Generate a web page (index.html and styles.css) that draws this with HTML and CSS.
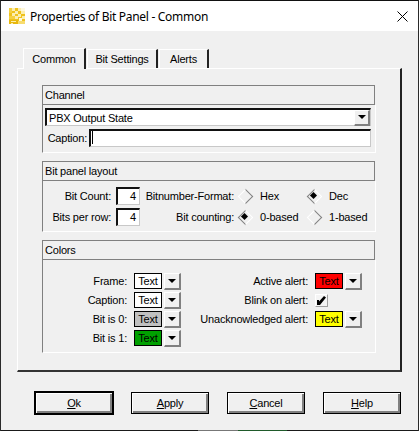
FILE: index.html
```html
<!DOCTYPE html>
<html lang="en">
<head>
    <meta charset="UTF-8">
    <title>Properties of Bit Panel - Common</title>
    <link rel="stylesheet" href="styles.css">
</head>
<body>
<div class="window">
    <div class="titlebar">
        <svg class="app-icon" width="16" height="16" viewBox="0 0 16 16">
            <rect width="16" height="16" fill="#efc21c"/>
            <path d="M3 0h3v3H3zM9 0h3v3H9zM6 3h3v3H6zM12 3h4v3h-4zM3 5h3v3H3zM9 6h3v3H9zM13 8h3v3h-3zM6 8h3v3H6z" fill="#fbeeb0"/>
            <path d="M12 0h4v3h-4zM10 10h3v3h-3z" fill="#fff8dc"/>
            <path d="M0 0h3v5H0zM0 8h6v3H0z" fill="#f5d040"/>
            <path d="M0 12h9v4H0z" fill="#e8b80e"/>
            <path d="M2 13h5v1H2zM2 15h2v1H2z" fill="#fbeeb0"/>
            <path d="M9 13h7v3H9z" fill="#f7dc70"/>
        </svg>
        <span class="title">Properties of Bit Panel - Common</span>
        <svg class="close" width="11" height="11" viewBox="0 0 11 11">
            <path d="M0.5 0.5l10 10M10.5 0.5l-10 10" stroke="#000" fill="none"/>
        </svg>
    </div>

    <div class="dialog">
        <div class="tabs">
            <div class="tab tab-active">Common</div>
            <div class="tab tab-settings">Bit Settings</div>
            <div class="tab tab-alerts">Alerts</div>
        </div>

        <div class="page">
            <!-- Channel -->
            <section class="group group-channel">
                <div class="group-head">Channel</div>
                <div class="group-body channel-body">
                    <div class="select sunken">
                        <span>PBX Output State</span>
                        <span class="drop-btn select-btn"><i class="arrow"></i></span>
                    </div>
                    <div class="caption-row">
                        <label class="caption-label">Caption:</label>
                        <div class="caption-input sunken"><i class="caret"></i></div>
                    </div>
                </div>
            </section>

            <!-- Bit panel layout -->
            <section class="group group-layout">
                <div class="group-head">Bit panel layout</div>
                <div class="group-body layout-body">
                    <label class="right">Bit Count:</label>
                    <div class="num sunken">4</div>
                    <label class="right">Bitnumber-Format:</label>
                    <span class="radio"></span>
                    <span>Hex</span>
                    <span class="radio radio-on"></span>
                    <span>Dec</span>

                    <label class="right">Bits per row:</label>
                    <div class="num sunken">4</div>
                    <label class="right">Bit counting:</label>
                    <span class="radio radio-on"></span>
                    <span>0-based</span>
                    <span class="radio"></span>
                    <span>1-based</span>
                </div>
            </section>

            <!-- Colors -->
            <section class="group group-colors">
                <div class="group-head">Colors</div>
                <div class="group-body colors-body">
                    <div class="color-col col-left">
                        <label class="right">Frame:</label>
                        <div class="swatch">Text</div>
                        <span class="drop-btn"><i class="arrow"></i></span>

                        <label class="right">Caption:</label>
                        <div class="swatch">Text</div>
                        <span class="drop-btn"><i class="arrow"></i></span>

                        <label class="right">Bit is 0:</label>
                        <div class="swatch swatch-gray">Text</div>
                        <span class="drop-btn"><i class="arrow"></i></span>

                        <label class="right">Bit is 1:</label>
                        <div class="swatch swatch-green">Text</div>
                        <span class="drop-btn"><i class="arrow"></i></span>
                    </div>
                    <div class="color-col col-right">
                        <label class="right">Active alert:</label>
                        <div class="swatch swatch-red">Text</div>
                        <span class="drop-btn"><i class="arrow"></i></span>

                        <label class="right">Blink on alert:</label>
                        <div class="check">
                            <svg width="9" height="9" viewBox="0 0 9 9">
                                <path d="M0 4h2v1.500L7 0l2 1.500L3 9H0z" fill="#000"/>
                            </svg>
                        </div>
                        <span></span>

                        <label class="right">Unacknowledged alert:</label>
                        <div class="swatch swatch-yellow">Text</div>
                        <span class="drop-btn"><i class="arrow"></i></span>
                    </div>
                </div>
            </section>
        </div>

        <div class="buttons">
            <button type="button" class="btn btn-default"><u>O</u>k</button>
            <button type="button" class="btn"><u>A</u>pply</button>
            <button type="button" class="btn"><u>C</u>ancel</button>
            <button type="button" class="btn"><u>H</u>elp</button>
        </div>
    </div>
    <div class="window-edge"></div>
</div>
</body>
</html>
```

FILE: styles.css
```css
* {
    box-sizing: border-box;
}

body {
    margin: 0;
    font-family: "Liberation Sans", Arial, sans-serif;
    font-size: 11px;
    letter-spacing: -0.2px;
    color: #000;
    background: #333;
}

label {
    white-space: nowrap;
}

.window {
    width: 419px;
    height: 431px;
    border: 1px solid #2a2a2a;
    border-top-color: #111;
    border-bottom: 0;
    display: flex;
    flex-direction: column;
    background: #f0f0f0;
}

.window-edge {
    flex: none;
    height: 1px;
    background: linear-gradient(to right, #1a1a1a 197px, #777 197px, #777 237px, #1f5a2a 237px, #1f5a2a 286px, #1a1a1a 286px);
}

.titlebar {
    height: 30px;
    background: #fff;
    display: flex;
    align-items: center;
    padding: 0 10px 0 8px;
    flex: none;
}

.title {
    font-family: "Noto Sans", sans-serif;
    font-size: 12px;
    letter-spacing: -0.3px;
    margin-left: 5px;
}

.close {
    margin-left: auto;
}

.dialog {
    flex: 1;
    padding: 16px 16px 0;
}

/* tabs */
.tabs {
    display: flex;
    height: 21px;
    padding-left: 6px;
    align-items: flex-end;
}

.tab {
    height: 19px;
    border-top: 1px solid #fff;
    border-left: 1px solid #fff;
    border-right: 2px solid #222;
    text-align: center;
    line-height: 19px;
    margin-right: 1px;
}

.tab-active {
    width: 63px;
    height: 21px;
    line-height: 20px;
    margin-right: 1px;
    position: relative;
    z-index: 1;
    margin-bottom: -1px;
    background: #f0f0f0;
}

.tab-settings {
    width: 71px;
}

.tab-alerts {
    width: 50px;
}

.page {
    height: 304px;
    width: 385px;
    border-top: 1px solid #fff;
    border-left: 1px solid #fff;
    border-right: 2px solid #222;
    border-bottom: 2px solid #333;
    padding: 16px 0 0 24px;
}

/* groups */
.group {
    width: 334px;
}

.group-head {
    height: 20px;
    border: 1px solid #808080;
    line-height: 19px;
    padding-left: 2px;
    margin-right: 1px;
}

.group-body {
    border-left: 1px solid #808080;
    border-right: 1px solid #fff;
    border-bottom: 1px solid #fff;
    border-top: 0;
}

.group-channel {
    margin-bottom: 8px;
}

.group-layout {
    margin-bottom: 8px;
}

.channel-body {
    height: 48px;
    padding: 3px 3px 0 2px;
}

.sunken {
    background: #fff;
    border-top: 2px solid #111;
    border-left: 2px solid #111;
    border-right: 1px solid #c8c8c8;
    border-bottom: 1px solid #c8c8c8;
}

.select {
    height: 18px;
    display: flex;
    align-items: center;
    justify-content: space-between;
    padding-left: 2px;
    width: 326px;
}

.caption-row {
    display: flex;
    align-items: center;
    margin-top: 3px;
    width: 326px;
}

.caption-label {
    width: 44px;
    text-align: right;
    padding-right: 2px;
}

.caption-input {
    flex: 1;
    height: 18px;
    padding: 0 0 0 1px;
}

.caret {
    display: block;
    width: 1px;
    height: 13px;
    background: #000;
}

.layout-body {
    height: 51px;
    display: grid;
    grid-template-columns: 68px 29px 94px 16px 53px 16px 60px;
    grid-auto-rows: 18px;
    row-gap: 3px;
    padding-top: 6px;
    align-items: center;
}

.layout-body > span:not(.radio) {
    padding-left: 10px;
}

.right {
    text-align: right;
}

.num {
    height: 18px;
    margin-left: 5px;
    width: 24px;
    text-align: right;
    padding-right: 3px;
    line-height: 15px;
}

/* diamond radio */
.radio {
    width: 16px;
    height: 16px;
    display: block;
    margin-left: 3px;
    position: relative;
}

.radio::before {
    content: "";
    position: absolute;
    left: 3px;
    top: 3px;
    width: 9px;
    height: 9px;
    transform: rotate(45deg);
    border-top: 1px solid #808080;
    border-left: 1px solid #fff;
    border-right: 1px solid #808080;
    border-bottom: 1px solid #fff;
}

.radio-on::before {
    border-top-color: #fff;
    border-right-color: #fff;
    border-left-color: #808080;
    border-bottom-color: #808080;
}

.radio-on::after {
    content: "";
    position: absolute;
    left: 5px;
    top: 5px;
    width: 5px;
    height: 5px;
    transform: rotate(45deg);
    background: #000;
}

.colors-body {
    height: 93px;
    display: flex;
    padding-top: 13px;
}

.color-col {
    display: grid;
    grid-auto-rows: 16px;
    row-gap: 3px;
    align-items: center;
    align-content: start;
}

.col-left {
    grid-template-columns: 84px 35px 19px;
}

.col-right {
    grid-template-columns: 127px 35px 19px;
}

.swatch,
.check {
    margin-left: 7px;
}

.swatch {
    height: 16px;
    width: 28px;
    border: 1px solid #000;
    background: #fff;
    text-align: center;
    line-height: 14px;
}

.swatch-gray {
    background: #c0c0c0;
}

.swatch-green {
    background: #00a000;
}

.swatch-red {
    background: #ff0000;
}

.swatch-yellow {
    background: #ffff00;
}

.drop-btn {
    width: 17px;
    height: 17px;
    margin-left: 2px;
    display: flex;
    align-items: center;
    justify-content: center;
    background: #f0f0f0;
    border-top: 1px solid #fff;
    border-left: 1px solid #fff;
    border-right: 2px solid #808080;
    border-bottom: 2px solid #808080;
}

.select-btn {
    width: 16px;
    height: 16px;
    margin-left: 0;
}

.arrow {
    display: block;
    width: 0;
    height: 0;
    border-left: 4px solid transparent;
    border-right: 4px solid transparent;
    border-top: 4px solid #000;
}

.check {
    width: 13px;
    height: 13px;
    background: #f4f4f4;
    border-top: 1px solid #fff;
    border-left: 1px solid #fff;
    border-right: 1px solid #a0a0a0;
    border-bottom: 1px solid #a0a0a0;
    display: flex;
    align-items: center;
    justify-content: center;
}

/* bottom buttons */
.buttons {
    display: flex;
    align-items: center;
    gap: 18px;
    margin-top: 18px;
    padding-left: 17px;
    height: 26px;
}

.btn {
    width: 78px;
    height: 22px;
    font: inherit;
    letter-spacing: inherit;
    color: #000;
    padding: 0;
    background: #f0f0f0;
    border: 1px solid #000;
    box-shadow: inset 1px 1px 0 #fff, inset -2px -2px 0 #808080;
}

.btn-default {
    width: 80px;
    height: 24px;
    margin-right: -1px;
    border-width: 2px;
}
```
